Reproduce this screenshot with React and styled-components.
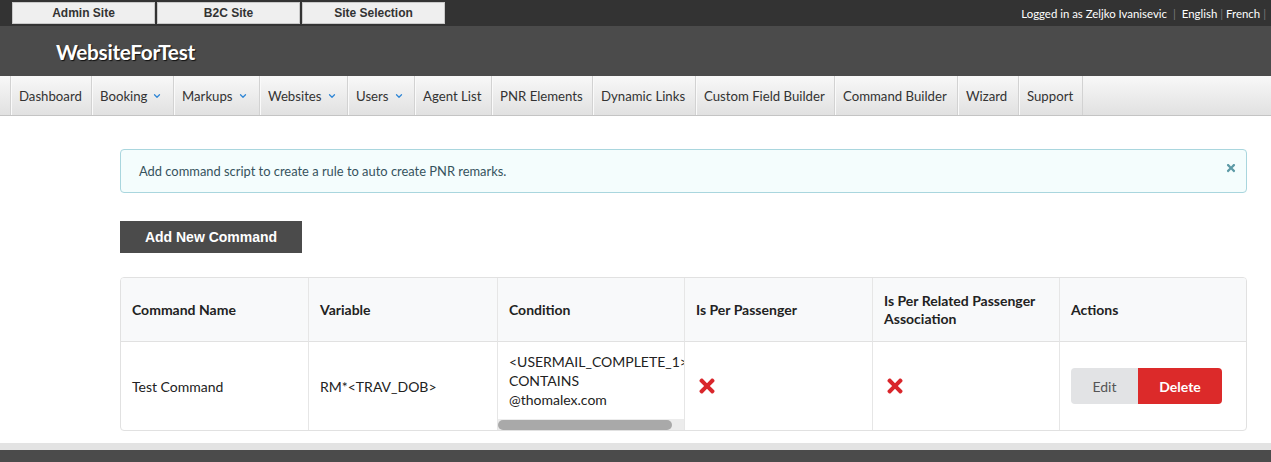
import React from 'react'
import styled, { createGlobalStyle } from 'styled-components'
import { FaTimes } from 'react-icons/fa'
import { ChevronDown } from 'lucide-react'

const GlobalStyle = createGlobalStyle`
  body {
    margin: 0;
    background: #fff;
    font-family: Lato, "Open Sans", sans-serif;
    color: #333;
  }
`

const TopBar = styled.div`
  height: 26px;
  background: #333333;
  display: flex;
  align-items: center;
  justify-content: space-between;
  padding: 0 2px 0 12px;
`
const SiteButtons = styled.div`
  display: flex;
  gap: 2px;
`
const SiteButton = styled.button`
  width: 143px;
  height: 22px;
  background: #efefef;
  border: 1px solid #c9c9c9;
  font-family: "Liberation Sans", Arial, sans-serif;
  font-weight: bold;
  font-size: 12px;
  color: #333;
  padding: 0;
`
const UserInfo = styled.div`
  color: #fff;
  font-size: 11.4px;
  display: flex;
  align-items: center;
`
const Sep = styled.span`
  color: #777;
  margin: 0 ${p => p.wide ? '6px' : '3px'};
`

const Header = styled.div`
  height: 50px;
  background: #4b4b4b;
  display: flex;
  align-items: center;
  padding-left: 56px;
`
const Brand = styled.div`
  color: #fff;
  font-size: 20.8px;
  font-weight: bold;
  letter-spacing: -0.3px;
  text-shadow: 1px 1px 1px #111;
`

const Nav = styled.div`
  height: 39px;
  background: linear-gradient(#f8f8f8, #e1e1e1);
  border-bottom: 1px solid #c4c4c4;
  display: flex;
  padding-left: 10px;
`
const NavItem = styled.div`
  width: ${p => p.w}px;
  box-sizing: border-box;
  flex-shrink: 0;
  display: flex;
  align-items: center;
  gap: 5px;
  padding-left: 8px;
  border-left: 1px solid #d2d2d2;
  border-right: ${p => p.last ? '1px solid #d2d2d2' : 'none'};
  box-shadow: inset 1px 0 0 #fafafa;
  font-size: 13.2px;
  color: #333;
  white-space: nowrap;
`

const Content = styled.div`
  padding: 33px 24px 12px 120px;
`
const Alert = styled.div`
  height: 42px;
  background: #f4fdfd;
  border: 1px solid #a9d6de;
  border-radius: 4px;
  display: flex;
  align-items: center;
  justify-content: space-between;
  padding: 0 9px 0 18px;
  font-size: 12.9px;
  color: #36535e;
`
const Close = styled.span`
  color: #5c9aa6;
  display: flex;
  margin-top: -6px;
`
const DarkButton = styled.button`
  margin-top: 28px;
  width: 182px;
  height: 32px;
  background: #4b4b4b;
  border: none;
  color: #fff;
  font-family: "Liberation Sans", Arial, sans-serif;
  font-weight: bold;
  font-size: 14px;
`

const Table = styled.div`
  margin-top: 24px;
  border: 1px solid #e1e1e1;
  border-radius: 4px;
  display: grid;
  grid-template-columns: 187px 189px 187px 188px 187px 1fr;
  overflow: hidden;
`
const HeadCell = styled.div`
  height: 63px;
  background: #f8f9fa;
  border-bottom: 1px solid #e1e1e1;
  border-left: ${p => p.first ? 'none' : '1px solid #e6e6e6'};
  display: flex;
  align-items: center;
  padding: 0 11px;
  font-size: 14px;
  font-weight: bold;
  line-height: 18px;
  color: #222;
`
const Cell = styled.div`
  height: 88px;
  border-left: ${p => p.first ? 'none' : '1px solid #e6e6e6'};
  display: flex;
  align-items: center;
  padding: 0 11px;
  font-size: 14px;
  color: #222;
  box-sizing: border-box;
`
const ScrollCell = styled.div`
  height: 88px;
  border-left: 1px solid #e6e6e6;
  display: flex;
  flex-direction: column;
  min-width: 0;
`
const ScrollView = styled.div`
  flex: 1;
  overflow: hidden;
  display: flex;
  align-items: center;
  padding-left: 11px;
  font-size: 14px;
  line-height: 19px;
  color: #222;
  white-space: nowrap;
`
const ScrollTrack = styled.div`
  height: 11px;
  background: #ececec;
  display: flex;
`
const ScrollThumb = styled.div`
  width: 174px;
  height: 10px;
  margin-top: 1px;
  border-radius: 5px;
  background: #a9a9a9;
`
const Cross = styled.span`
  color: #d9262b;
  display: flex;
`
const BtnGroup = styled.div`
  display: flex;
`
const GroupButton = styled.button`
  height: 36px;
  width: ${p => p.w}px;
  border: none;
  background: ${p => p.danger ? '#dc2a2a' : '#e2e3e5'};
  color: ${p => p.danger ? '#fff' : '#555'};
  font-family: Lato, sans-serif;
  font-weight: ${p => p.danger ? 'bold' : 'normal'};
  font-size: 14px;
  border-radius: ${p => p.danger ? '0 4px 4px 0' : '4px 0 0 4px'};
`

const FooterBand = styled.div`
  height: 7px;
  background: #e3e3e3;
`
const Footer = styled.div`
  height: 40px;
  background: #4b4b4b;
`

const navItems = [
  ['Dashboard', 81], ['Booking', 82, true], ['Markups', 86, true], ['Websites', 88, true],
  ['Users', 67, true], ['Agent List', 77], ['PNR Elements', 101], ['Dynamic Links', 103],
  ['Custom Field Builder', 139], ['Command Builder', 123], ['Wizard', 61], ['Support', 65]
]

const heads = ['Command Name', 'Variable', 'Condition', 'Is Per Passenger', 'Is Per Related Passenger Association', 'Actions']

export default function App() {
  return (
    <>
      <GlobalStyle />
      <TopBar>
        <SiteButtons>
          <SiteButton>Admin Site</SiteButton>
          <SiteButton>B2C Site</SiteButton>
          <SiteButton>Site Selection</SiteButton>
        </SiteButtons>
        <UserInfo>
          Logged in as Zeljko Ivanisevic<Sep wide>|</Sep>English<Sep>|</Sep>French<Sep>|</Sep>
        </UserInfo>
      </TopBar>
      <Header>
        <Brand>WebsiteForTest</Brand>
      </Header>
      <Nav>
        {navItems.map(([name, w, drop], i) => (
          <NavItem key={name} w={w} last={i === navItems.length - 1}>
            {name}
            {drop && <ChevronDown size={10} strokeWidth={3} color="#2f86d6" />}
          </NavItem>
        ))}
      </Nav>
      <Content>
        <Alert>
          Add command script to create a rule to auto create PNR remarks.
          <Close><FaTimes size={12} /></Close>
        </Alert>
        <DarkButton>Add New Command</DarkButton>
        <Table>
          {heads.map((h, i) => (
            <HeadCell key={h} first={i === 0}>{h}</HeadCell>
          ))}
          <Cell first>Test Command</Cell>
          <Cell>RM*&lt;TRAV_DOB&gt;</Cell>
          <ScrollCell>
            <ScrollView>
              <div>&lt;USERMAIL_COMPLETE_1&gt;<br />CONTAINS<br />@thomalex.com</div>
            </ScrollView>
            <ScrollTrack><ScrollThumb /></ScrollTrack>
          </ScrollCell>
          <Cell><Cross><FaTimes size={22} /></Cross></Cell>
          <Cell><Cross><FaTimes size={22} /></Cross></Cell>
          <Cell>
            <BtnGroup>
              <GroupButton w={67}>Edit</GroupButton>
              <GroupButton w={84} danger>Delete</GroupButton>
            </BtnGroup>
          </Cell>
        </Table>
      </Content>
      <FooterBand />
      <Footer />
    </>
  )
}
